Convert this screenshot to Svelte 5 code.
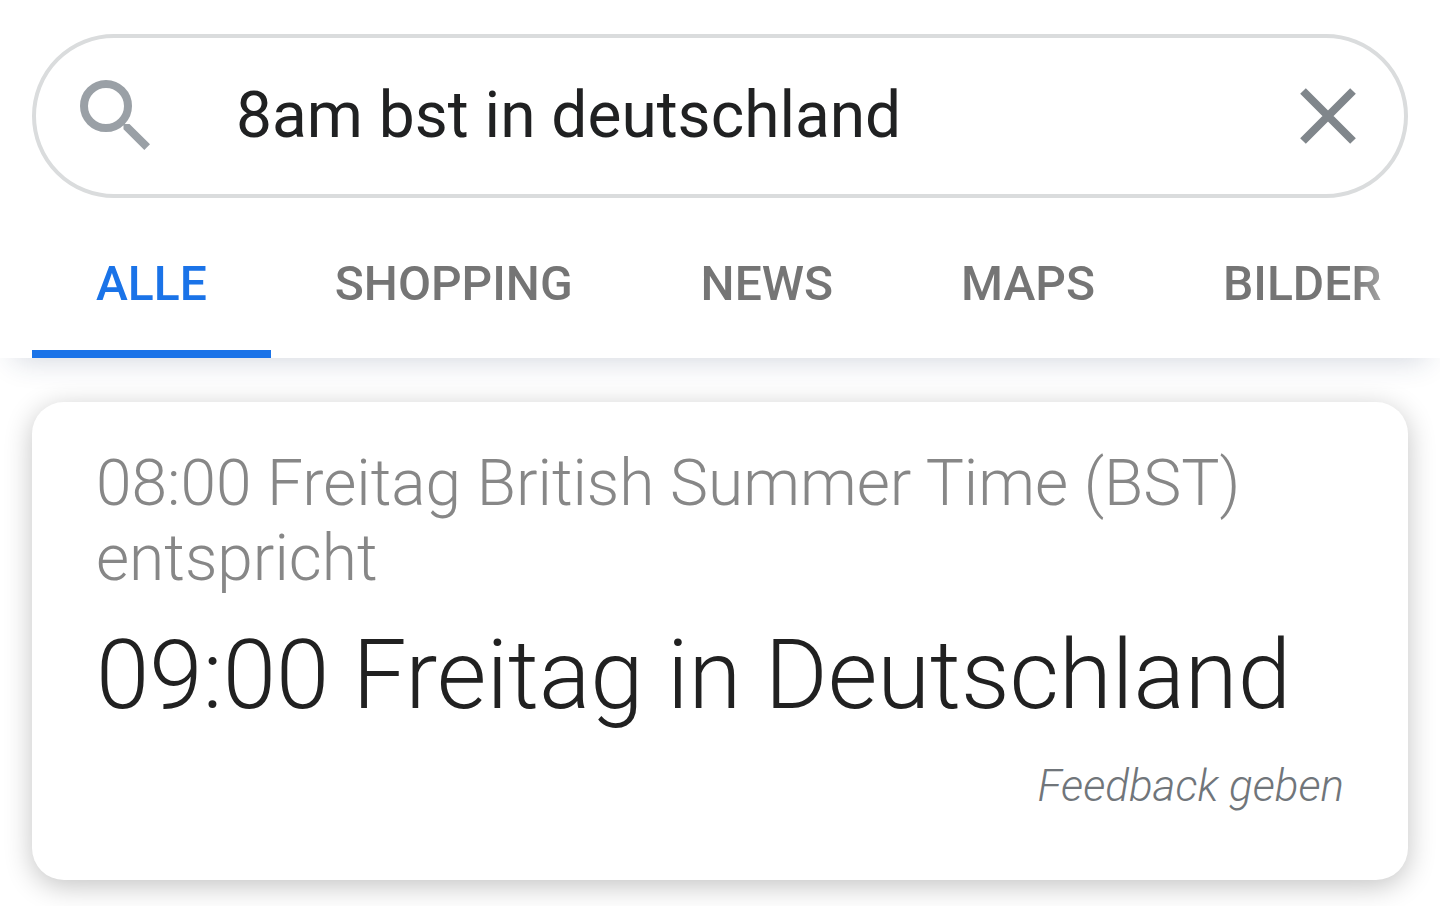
<script>
  const tabs = ['ALLE', 'SHOPPING', 'NEWS', 'MAPS', 'BILDER'];

  let query = $state('8am bst in deutschland');
  let active = $state('ALLE');
</script>

<header class="header">
  <form class="search" role="search" onsubmit={(e) => e.preventDefault()}>
    <button class="icon-btn" type="submit" aria-label="Suche">
      <svg width="72" height="72" viewBox="0 0 72 72" fill="none">
        <circle cx="26" cy="26" r="22" stroke="#9aa0a6" stroke-width="8" />
        <path d="M42 41L45 44H49.5L70 64.2L64.3 70L43.5 49.2V45.5L41 43Z" fill="#9aa0a6" />
      </svg>
    </button>
    <input class="query" type="text" aria-label="Suchanfrage" bind:value={query} />
    <button class="icon-btn" type="button" aria-label="Löschen" onclick={() => (query = '')}>
      <svg width="56" height="56" viewBox="0 0 56 56" fill="none">
        <path d="M3 3L53 53M53 3L3 53" stroke="#80868b" stroke-width="8" />
      </svg>
    </button>
  </form>

  <nav class="tabs">
    {#each tabs as tab}
      <a class="tab" class:active={active === tab} href="#{tab.toLowerCase()}" onclick={() => (active = tab)}>{tab}</a>
    {/each}
  </nav>
</header>

<main class="card">
  <p class="source">08:00 Freitag British Summer Time (BST) entspricht</p>
  <h1 class="result">09:00 Freitag in Deutschland</h1>
  <a class="feedback" href="#feedback">Feedback geben</a>
</main>

<style>
  :global(body) {
    background: #ffffff;
    font-family: Roboto, sans-serif;
    overflow-x: hidden;
  }

  .header {
    padding-top: 34px;
    background: #ffffff;
    box-shadow: 0 16px 28px -14px rgba(32, 48, 92, 0.2);
  }

  /* Search box */
  .search {
    display: flex;
    align-items: center;
    box-sizing: border-box;
    height: 164px;
    margin: 0 32px;
    padding: 0 48px 0 44px;
    border: 4px solid #dadcdd;
    border-radius: 82px;
  }

  .icon-btn {
    display: flex;
    padding: 0;
    border: none;
    background: none;
    cursor: pointer;
  }

  .query {
    flex: 1;
    min-width: 0;
    margin: 0 32px 0 84px;
    padding: 0 0 2px;
    border: none;
    outline: none;
    background: none;
    color: #202122;
    font-family: inherit;
    font-size: 64px;
  }

  /* Tabs */
  .tabs {
    display: flex;
    padding: 0 32px;
    overflow: hidden;
    mask-image: linear-gradient(to right, #000 calc(100% - 88px), transparent);
  }

  .tab {
    box-sizing: border-box;
    height: 160px;
    padding: 56px 64px 0;
    border-bottom: 8px solid transparent;
    color: #757575;
    font-size: 48px;
    font-weight: 500;
    line-height: 60px;
    text-decoration: none;
  }

  .tab.active {
    color: #1a73e8;
    border-bottom-color: #1a73e8;
  }

  /* Answer */
  .card {
    display: flex;
    flex-direction: column;
    box-sizing: border-box;
    margin: 44px 32px 26px;
    padding: 44px 64px 62px;
    border-radius: 32px;
    background: #ffffff;
    box-shadow: 0 6px 28px rgba(0, 0, 0, 0.24);
  }

  .source {
    margin: 0;
    color: #878787;
    font-size: 64px;
    font-weight: 300;
    line-height: 75px;
  }

  .result {
    margin: 24px 0;
    color: #212121;
    font-size: 96px;
    font-weight: 300;
    line-height: 110px;
  }

  .feedback {
    align-self: flex-end;
    color: #70757a;
    font-size: 44px;
    font-style: italic;
    font-weight: 300;
    line-height: 64px;
    text-decoration: none;
  }
</style>
